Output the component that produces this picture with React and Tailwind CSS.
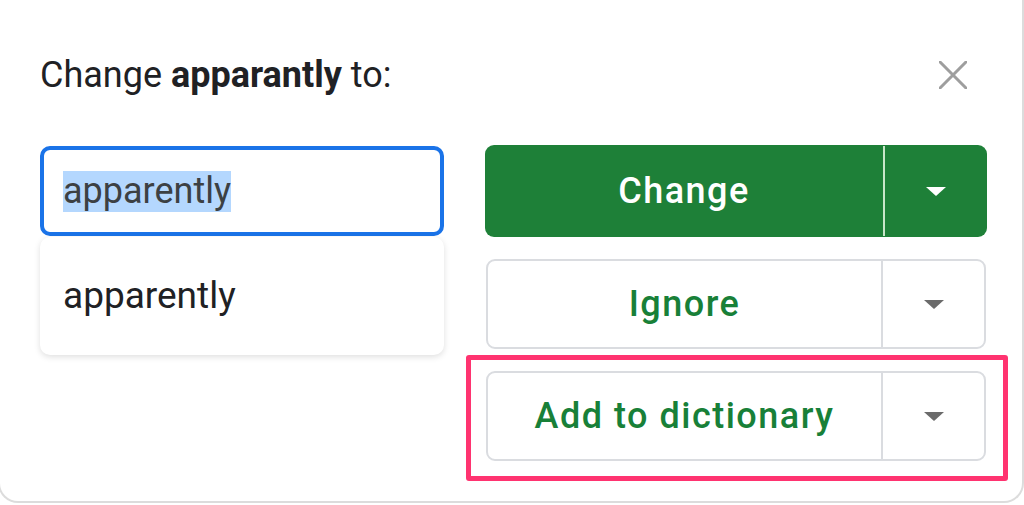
import React from 'react';

const Caret = ({ color }) => (
    <svg width="20" height="9" viewBox="0 0 20 9">
        <path d="M0 0 L20 0 L10 9 Z" fill={color} />
    </svg>
);

const SplitButton = ({ label }) => (
    <div className="flex h-[90px] rounded-[9px] border-2 border-[#dadce0] bg-white">
        <div className="flex flex-1 items-center justify-center text-[36px] font-medium tracking-[1.5px] text-[#188038]">
            {label}
        </div>
        <div className="w-[2px] bg-[#dadce0]" />
        <div className="flex w-[101px] items-center justify-center">
            <Caret color="#6b6b6b" />
        </div>
    </div>
);

const App = () => {
    return (
        <div className="h-[505px] w-full overflow-hidden bg-white font-['Roboto',sans-serif]">
            <div className="-ml-[2px] h-[503px] w-[1026px] rounded-b-[20px] border-x-2 border-b-2 border-[#dcdcdc] bg-white">
                {/* header */}
                <div className="flex items-center justify-between pl-[40px] pr-[55px] pt-[54px]">
                    <h1 className="text-[36px] leading-[42px] text-[#202124]">
                        Change <span className="font-bold">apparantly</span> to:
                    </h1>
                    <svg width="28" height="28" viewBox="0 0 28 28">
                        <path
                            d="M1 1 L27 27 M27 1 L1 27"
                            stroke="#9e9e9e"
                            strokeWidth="3"
                            strokeLinecap="round"
                        />
                    </svg>
                </div>

                <div className="mt-[49px] flex pl-[40px]">
                    {/* suggestion column */}
                    <div className="mt-[1px] w-[404px]">
                        <div className="flex h-[90px] items-center rounded-[10px] border-4 border-[#1a73e8] pl-[19px]">
                            <span className="bg-[#b4d7fe] text-[36px] leading-[41px] text-[#3c4043]">
                                apparently
                            </span>
                        </div>
                        <div className="mt-[1px] flex h-[118px] items-center rounded-[10px] bg-white pl-[23px] text-[37px] text-[#202124] shadow-[0_2px_6px_rgba(0,0,0,0.13)]">
                            apparently
                        </div>
                    </div>

                    {/* actions column */}
                    <div className="ml-[41px] w-[502px]">
                        <div className="flex h-[92px] rounded-[9px] bg-[#1e8038]">
                            <div className="flex flex-1 items-center justify-center text-[36px] font-medium tracking-[1.5px] text-white">
                                Change
                            </div>
                            <div className="my-[1px] w-[2px] bg-[#c8e6c9]" />
                            <div className="flex w-[102px] items-center justify-center">
                                <Caret color="#ffffff" />
                            </div>
                        </div>
                        <div className="mx-[1px] mt-[22px]">
                            <SplitButton label="Ignore" />
                        </div>
                        <div className="-ml-[19px] -mr-[21px] mt-[6px] rounded-[3px] border-[5px] border-[#ff3370] pb-[15px] pl-[15px] pr-[17px] pt-[11px]">
                            <SplitButton label="Add to dictionary" />
                        </div>
                    </div>
                </div>
            </div>
        </div>
    );
};

export default App;
